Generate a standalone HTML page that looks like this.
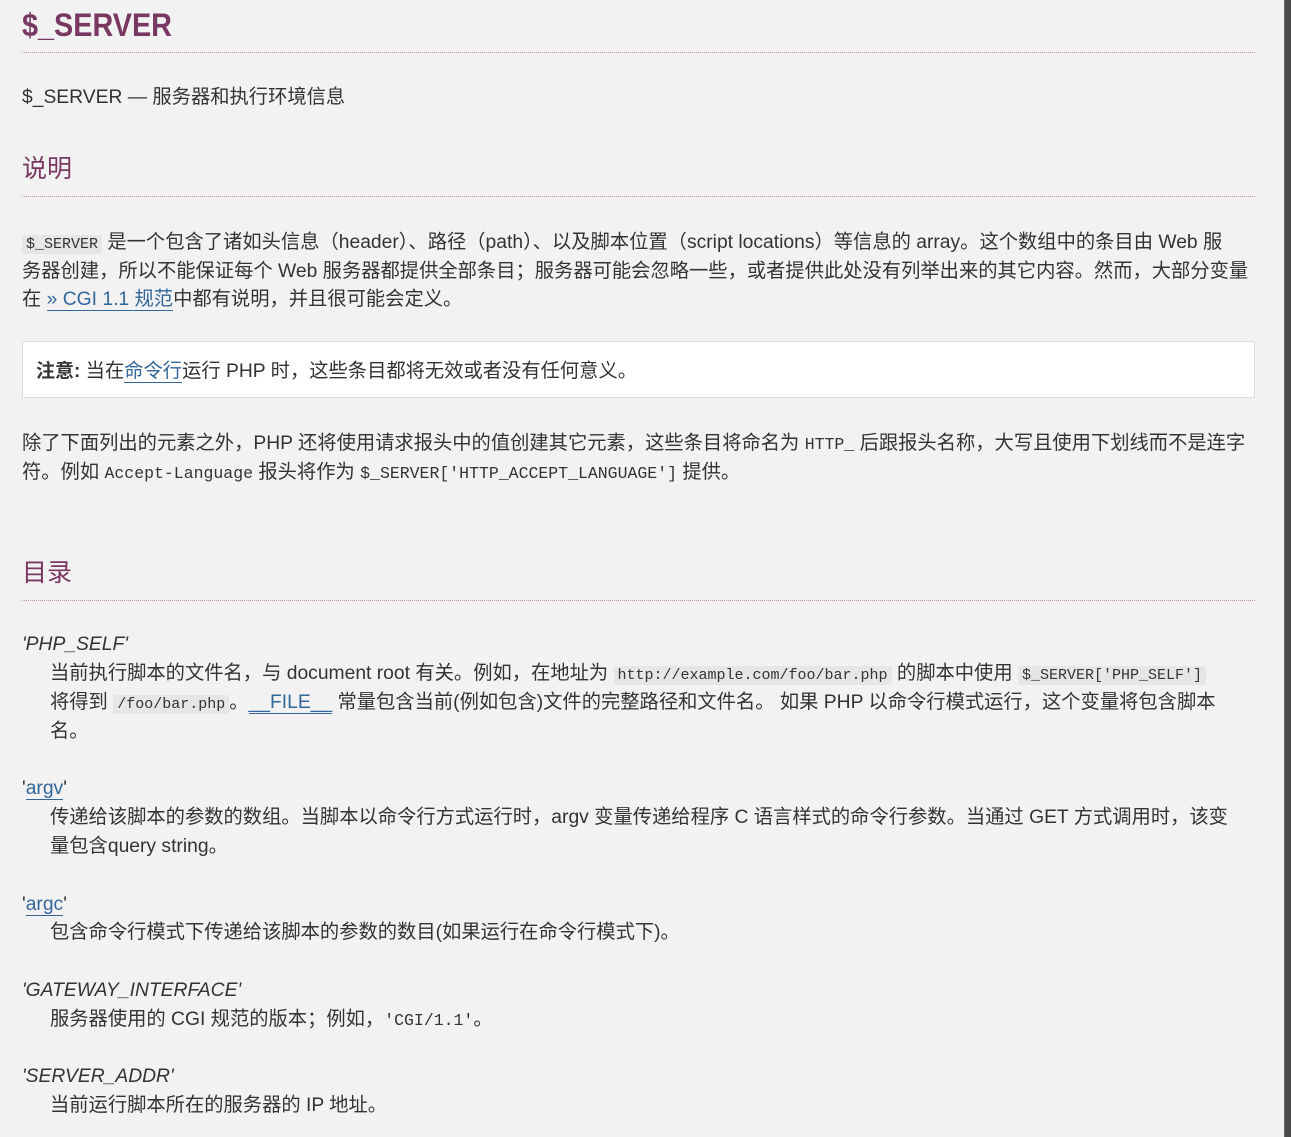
<!DOCTYPE html>
<html><head><meta charset="utf-8"><style>
html,body{margin:0;padding:0;}
body{width:1291px;height:1137px;background:#f2f2f2;position:relative;overflow:hidden;
font-family:"Liberation Sans","Noto Sans CJK SC",sans-serif;font-size:19.3px;color:#333;}
.l{position:absolute;white-space:nowrap;line-height:29px;height:29px;}
.hr{position:absolute;left:22px;width:1233px;border-top:1px dotted #c493b4;height:0;}
h1,h2{margin:0;font-weight:normal;color:#793862;position:absolute;white-space:nowrap;}
h1{font-size:32px;font-weight:bold;left:22px;top:5px;line-height:40px;transform:scaleX(0.9);transform-origin:0 0;}
h2{font-size:25px;left:22px;line-height:32px;}
code,.c{font-family:"Liberation Mono","Noto Sans CJK SC",monospace;font-size:15px;}
.c{font-size:16.5px;}
.cb{background:#e6e6e6;padding:1px 4px;border-radius:2px;}
a{color:#369;text-decoration:none;border-bottom:1px solid #369;}
.sb{position:absolute;right:0;top:0;width:6px;height:1137px;background:#4a4a4a;border-left:1px solid #666;}
.note{position:absolute;left:22px;top:341px;width:1231px;height:55px;background:#fff;border:1px solid #ddd;}
i{font-style:italic;}
</style></head><body>
<h1>$_SERVER</h1>
<div class="hr" style="top:52px"></div>
<div class="l" style="left:22px;top:83px">$_SERVER — 服务器和执行环境信息</div>
<h2 style="top:153px">说明</h2>
<div class="hr" style="top:196px"></div>
<div class="l" style="left:22px;top:228px"><code class="cb">$_SERVER</code> 是一个包含了诸如头信息（header）、路径（path）、以及脚本位置（script locations）等信息的 array。这个数组中的条目由 Web 服</div>
<div class="l" style="left:22px;top:257px">务器创建，所以不能保证每个 Web 服务器都提供全部条目；服务器可能会忽略一些，或者提供此处没有列举出来的其它内容。然而，大部分变量</div>
<div class="l" style="left:22px;top:285px">在 <a>» CGI 1.1 规范</a>中都有说明，并且很可能会定义。</div>
<div class="note"></div>
<div class="l" style="left:36px;top:357px"><b style="font-size:19px">注意:</b> 当在<a>命令行</a>运行 PHP 时，这些条目都将无效或者没有任何意义。</div>
<div class="l" style="left:22px;top:429px">除了下面列出的元素之外，PHP 还将使用请求报头中的值创建其它元素，这些条目将命名为 <span class="c">HTTP_</span> 后跟报头名称，大写且使用下划线而不是连字</div>
<div class="l" style="left:22px;top:458px">符。例如 <span class="c">Accept-Language</span> 报头将作为 <span class="c">$_SERVER['HTTP_ACCEPT_LANGUAGE']</span> 提供。</div>
<h2 style="top:557px">目录</h2>
<div class="hr" style="top:600px"></div>
<div class="l" style="left:22px;top:630px"><i>'PHP_SELF'</i></div>
<div class="l" style="left:50px;top:659px">当前执行脚本的文件名，与 document root 有关。例如，在地址为 <code class="cb">http://example.com/foo/bar.php</code> 的脚本中使用 <code class="cb">$_SERVER['PHP_SELF']</code></div>
<div class="l" style="left:50px;top:688px">将得到 <code class="cb">/foo/bar.php</code>。<a>__FILE__</a> 常量包含当前(例如包含)文件的完整路径和文件名。 如果 PHP 以命令行模式运行，这个变量将包含脚本</div>
<div class="l" style="left:50px;top:717px">名。</div>
<div class="l" style="left:22px;top:774px">'<a>argv</a>'</div>
<div class="l" style="left:50px;top:803px">传递给该脚本的参数的数组。当脚本以命令行方式运行时，argv 变量传递给程序 C 语言样式的命令行参数。当通过 GET 方式调用时，该变</div>
<div class="l" style="left:50px;top:832px">量包含query string。</div>
<div class="l" style="left:22px;top:890px">'<a>argc</a>'</div>
<div class="l" style="left:50px;top:918px">包含命令行模式下传递给该脚本的参数的数目(如果运行在命令行模式下)。</div>
<div class="l" style="left:22px;top:976px"><i>'GATEWAY_INTERFACE'</i></div>
<div class="l" style="left:50px;top:1005px">服务器使用的 CGI 规范的版本；例如，<span class="c">'CGI/1.1'</span>。</div>
<div class="l" style="left:22px;top:1062px"><i>'SERVER_ADDR'</i></div>
<div class="l" style="left:50px;top:1091px">当前运行脚本所在的服务器的 IP 地址。</div>
<div class="sb"></div>
</body></html>
